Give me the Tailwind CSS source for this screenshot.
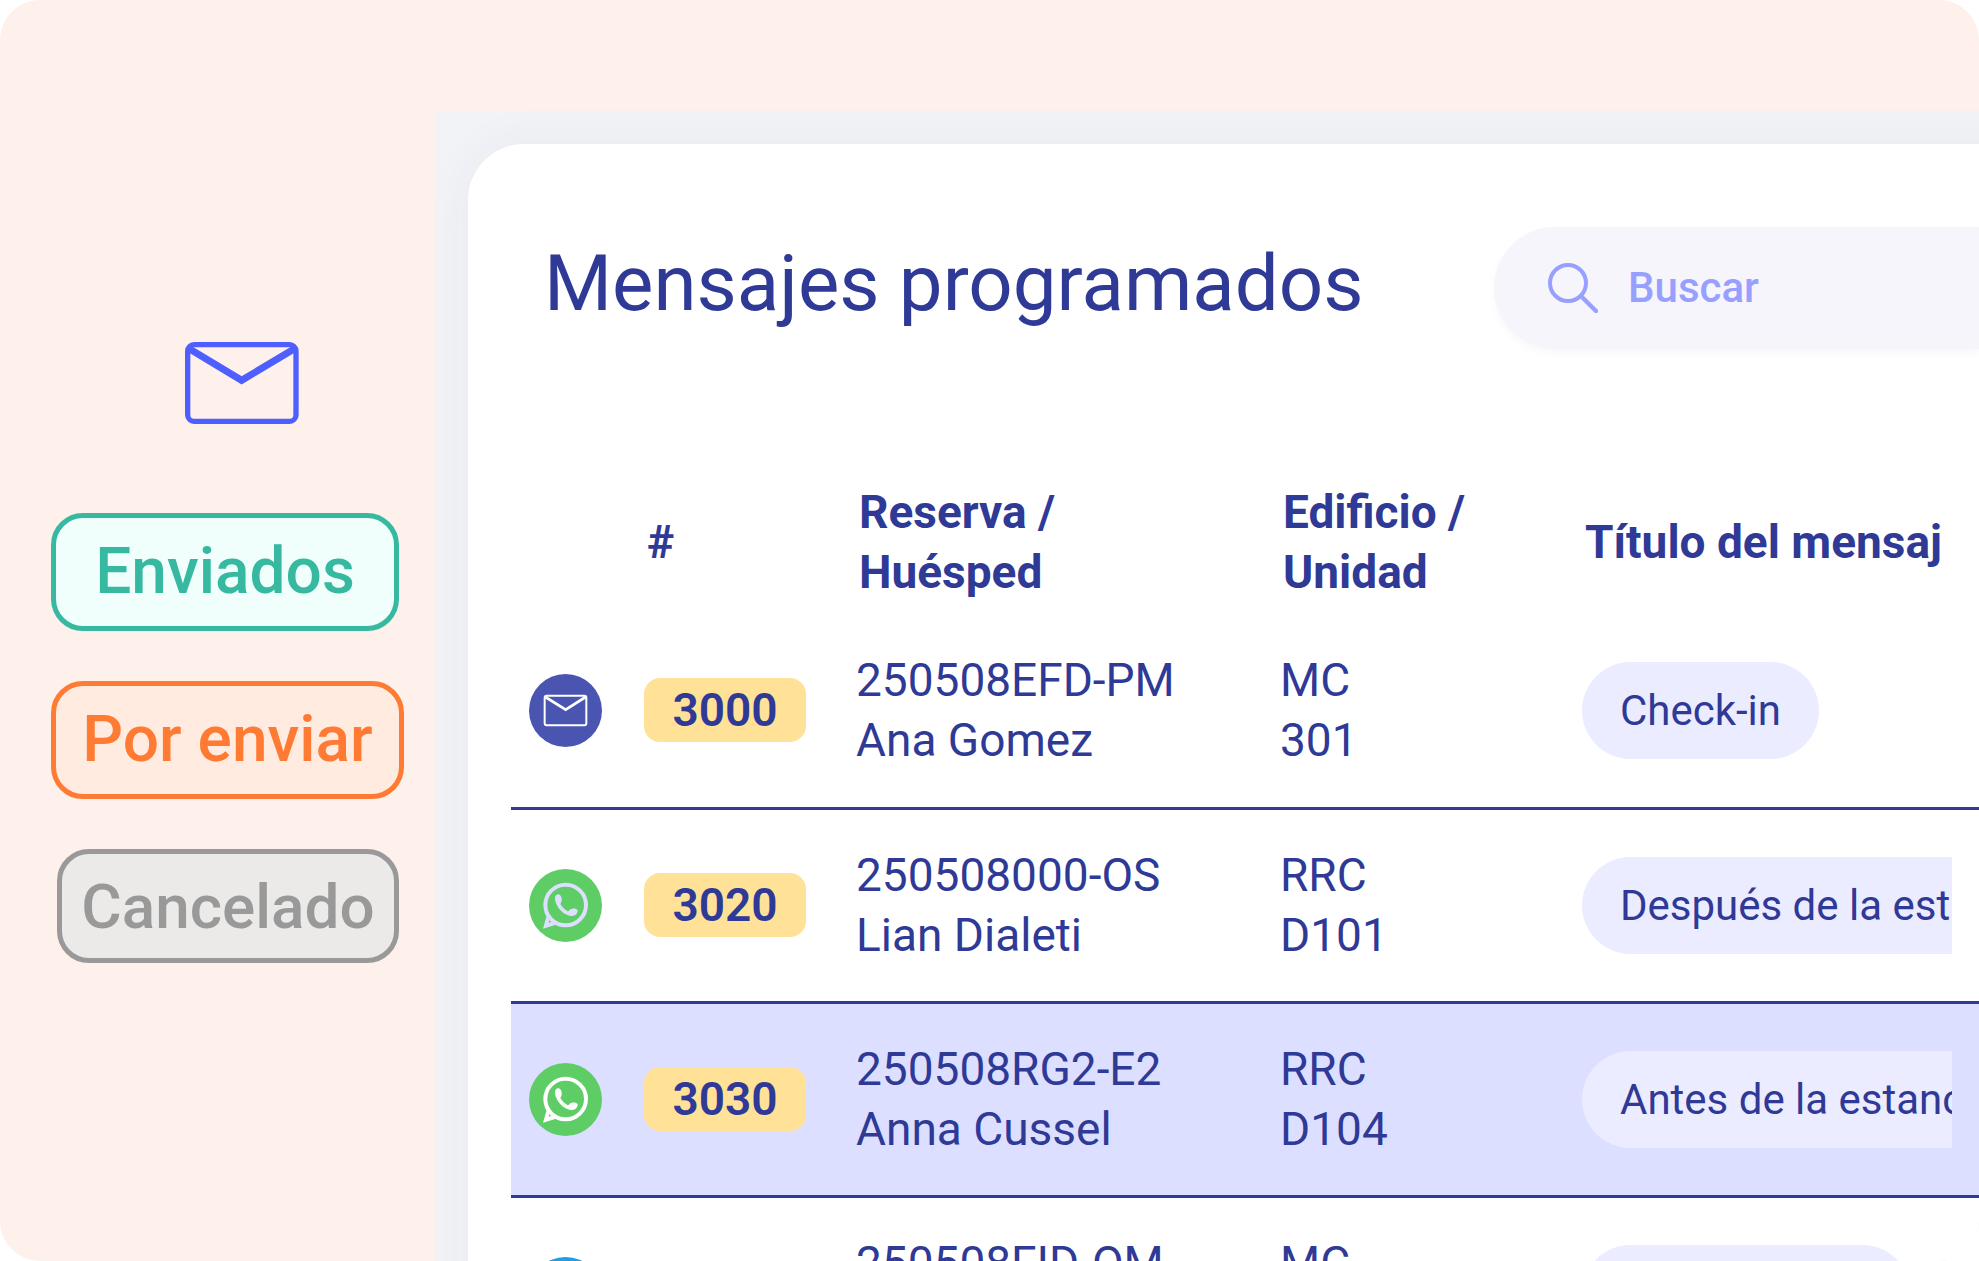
<!DOCTYPE html>
<html lang="es">
  <head>
    <meta charset="UTF-8" />
    <meta name="viewport" content="width=device-width, initial-scale=1.0" />
    <title>Mensajes programados</title>
    <script src="https://cdn.jsdelivr.net/npm/@tailwindcss/browser@4"></script>
  </head>
  <body class="bg-white font-['Roboto',sans-serif] text-[#2f3996]">
    <!-- shared icons -->
    <svg class="hidden">
      <symbol id="icon-whatsapp" viewBox="41 31 219 219">
        <circle cx="151" cy="139" r="61" fill="none" stroke="currentColor" stroke-width="12" />
        <path d="M88 160L94 172L83 210L122 198L134 203L127 190L120 186L100 192L105 173L99 160Z" fill="currentColor" />
        <path d="M119 118C119 110 126 105 133 108C139 112 141 122 138 130C136 134 134 135 137 139C142 147 149 153 156 157C160 159 161 155 165 152C172 148 184 149 187 155C187 165 180 172 170 172C145 172 119 142 119 118Z" fill="currentColor" />
      </symbol>
    </svg>

    <div class="flex h-screen overflow-hidden rounded-[40px] bg-[#fef0eb]">
      <aside class="w-[435px] shrink-0 pt-[342px]">
        <svg class="ml-[185px] h-[82px] w-[114px]" viewBox="0 0 342 246" fill="none" stroke="#4f5fff">
          <rect x="8" y="8" width="325" height="230" rx="19" stroke-width="16" />
          <path d="M14 21L170 115L327 21" stroke-width="21" />
        </svg>
        <div class="mt-[89px] flex flex-col items-start gap-[50px] pl-[51px]">
          <button class="h-[118px] w-[348px] rounded-[32px] border-[5px] border-[#36b9a0] bg-[#f0fffc] text-[64px] font-medium text-[#36b9a0]">Enviados</button>
          <button class="h-[118px] w-[353px] rounded-[32px] border-[5px] border-[#ff7a32] bg-[#ffebdf] text-[64px] font-medium text-[#ff7a32]">Por enviar</button>
          <button class="ml-[6px] h-[114px] w-[342px] rounded-[32px] border-[5px] border-[#999999] bg-[#ebeae8] text-[62px] font-medium text-[#999999]">Cancelado</button>
        </div>
      </aside>

      <main class="mt-[111px] min-w-0 flex-1 bg-[#f2f3f7] pt-[33px] pl-[33px]">
        <section class="-mr-16 min-h-full rounded-tl-[56px] bg-white pt-[83px] pr-16 shadow-[0_0_50px_rgba(50,50,93,0.05)]">
          <header class="flex items-center justify-between pl-[76px]">
            <h1 class="pb-2 text-[78px] leading-[114px] whitespace-nowrap">Mensajes programados</h1>
            <label class="flex h-[122px] w-[485px] shrink-0 items-center rounded-l-full bg-[#f6f5fb] pl-[54px] shadow-[0_4px_8px_rgba(0,0,0,0.03)]">
              <svg class="h-[50px] w-[50px] shrink-0" viewBox="0 0 150 150" fill="none" stroke="#98a0ff">
                <circle cx="60" cy="60" r="54" stroke-width="12" />
                <path d="M101 101L144 144" stroke-width="13" stroke-linecap="round" />
              </svg>
              <input type="search" placeholder="Buscar" aria-label="Buscar" class="ml-[30px] w-full min-w-0 bg-transparent pb-[2px] text-[42px] font-medium outline-none placeholder:text-[#98a0ff]" />
            </label>
          </header>

          <div class="mt-[133px] pl-[43px]">
            <table class="w-full table-fixed text-left text-[46px] leading-[60px] whitespace-nowrap">
              <colgroup>
                <col class="w-[133px]" />
                <col class="w-[212px]" />
                <col class="w-[424px]" />
                <col class="w-[302px]" />
                <col />
              </colgroup>
              <thead>
                <tr>
                  <th class="pb-3"></th>
                  <th class="pb-3 pl-[3px] font-bold">#</th>
                  <th class="pb-3 pl-[3px] font-bold">Reserva /<br />Huésped</th>
                  <th class="pb-3 pl-[3px] font-bold">Edificio /<br />Unidad</th>
                  <th class="pb-3 pl-[3px] font-bold">Título del mensaj</th>
                </tr>
              </thead>
              <tbody>
                <tr class="h-[194px] border-b-3 border-[#2f3996]">
                  <td class="pl-[18px]">
                    <span class="block size-[73px] rounded-full bg-[#4a55b2]">
                      <svg class="size-full" viewBox="41 51 219 219" fill="none" stroke="#ffffff" stroke-width="6">
                        <rect x="88" y="116" width="125" height="89" rx="6" />
                        <path d="M90 120L151 158L211 120" stroke-width="8" />
                      </svg>
                    </span>
                  </td>
                  <td><span class="block h-[64px] w-[162px] rounded-2xl bg-[#ffe298] text-center leading-[64px] font-semibold">3000</span></td>
                  <td>250508EFD-PM<br />Ana Gomez</td>
                  <td>MC<br />301</td>
                  <td class="pr-[27px]">
                    <div class="flex overflow-hidden text-[42px]">
                      <span class="rounded-full bg-[#ebecff] px-[38px] leading-[97px]">Check-in</span>
                    </div>
                  </td>
                </tr>
                <tr class="h-[194px] border-b-3 border-[#2f3996]">
                  <td class="pl-[18px]">
                    <span class="block size-[73px] rounded-full bg-[#5fcd66] text-[#dcdfff]">
                      <svg class="size-full"><use href="#icon-whatsapp" /></svg>
                    </span>
                  </td>
                  <td><span class="block h-[64px] w-[162px] rounded-2xl bg-[#ffe298] text-center leading-[64px] font-semibold">3020</span></td>
                  <td>250508000-OS<br />Lian Dialeti</td>
                  <td>RRC<br />D101</td>
                  <td class="pr-[27px]">
                    <div class="flex overflow-hidden text-[42px]">
                      <span class="rounded-full bg-[#ebecff] px-[38px] leading-[97px]">Después de la estancia</span>
                    </div>
                  </td>
                </tr>
                <tr class="h-[194px] border-b-3 border-[#2f3996] bg-[#dcdfff]">
                  <td class="pl-[18px]">
                    <span class="block size-[73px] rounded-full bg-[#5fcd66] text-white">
                      <svg class="size-full"><use href="#icon-whatsapp" /></svg>
                    </span>
                  </td>
                  <td><span class="block h-[64px] w-[162px] rounded-2xl bg-[#ffe298] text-center leading-[64px] font-semibold">3030</span></td>
                  <td>250508RG2-E2<br />Anna Cussel</td>
                  <td>RRC<br />D104</td>
                  <td class="pr-[27px]">
                    <div class="flex overflow-hidden text-[42px]">
                      <span class="rounded-full bg-[#ebecff] px-[38px] leading-[97px]">Antes de la estancia</span>
                    </div>
                  </td>
                </tr>
                <tr class="h-[194px] border-b-3 border-[#2f3996]">
                  <td class="pl-[18px]"><span class="block size-[73px] rounded-full bg-[#1c9fe8]"></span></td>
                  <td></td>
                  <td>250508FID-OM<br />&nbsp;</td>
                  <td>MC<br />&nbsp;</td>
                  <td class="pr-[27px]">
                    <div class="flex overflow-hidden text-[42px]">
                      <span class="w-[329px] rounded-full bg-[#ebecff] px-[38px] leading-[97px]">&nbsp;</span>
                    </div>
                  </td>
                </tr>
              </tbody>
            </table>
          </div>
        </section>
      </main>
    </div>
  </body>
</html>
